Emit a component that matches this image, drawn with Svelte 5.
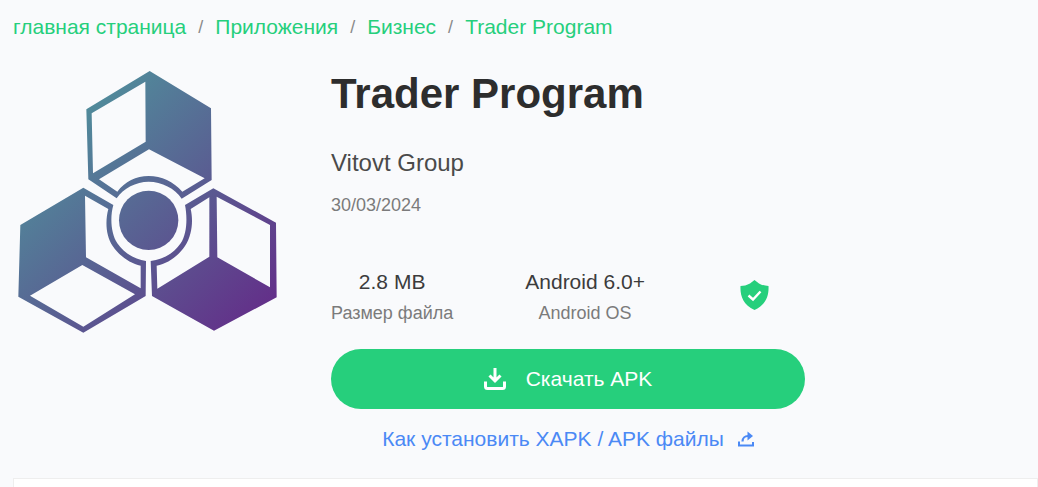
<script>
  const crumbs = ['главная страница', 'Приложения', 'Бизнес', 'Trader Program'];
</script>

<div class="page">
  <nav class="crumbs">
    {#each crumbs as crumb, i}
      {#if i > 0}<span class="sep">/</span>{/if}
      <a href="#top">{crumb}</a>
    {/each}
  </nav>

  <section class="app">
    <svg class="logo" viewBox="0 0 900 840" aria-hidden="true">
      <defs>
        <linearGradient id="lg" gradientUnits="userSpaceOnUse" x1="130" y1="180" x2="780" y2="830">
          <stop offset="0" stop-color="#4f929c" />
          <stop offset="1" stop-color="#642a88" />
        </linearGradient>
      </defs>
      <g fill="url(#lg)" fill-rule="evenodd">
        <path d="M449 33L633 145L635 360L545 416C525 385 485 365 446 365C408 365 370 385 350 415L265 358L259 148Z
                 M275 160L436 65L437 245L279 340Z
                 M447 268L614 355L547 395C520 365 485 348 446 348C408 348 375 365 352 395L297 358Z" />
        <path d="M250 383L340 435C330 470 332 520 352 550C372 580 405 598 438 603L437 708L250 818L55 710L61 495Z
                 M255 407L325 447C316 480 316 525 338 558C358 588 390 610 422 617L422 685L258 592Z
                 M247 615L405 703L250 800L90 707Z" />
        <path d="M640 385L828 488L830 712L642 812L456 708L452 603C490 598 522 580 542 550C562 520 562 470 555 435Z
                 M650 410L810 495L810 682L652 592Z
                 M628 412L628 590L472 686L470 617C505 610 535 588 555 558C577 525 580 480 572 447Z" />
        <circle cx="446" cy="481" r="89" />
      </g>
    </svg>

    <div class="info">
      <h1>Trader Program</h1>
      <p class="dev">Vitovt Group</p>
      <p class="date">30/03/2024</p>

      <div class="stats">
        <div class="stat size">
          <strong>2.8 MB</strong>
          <span>Размер файла</span>
        </div>
        <div class="stat os">
          <strong>Android 6.0+</strong>
          <span>Android OS</span>
        </div>
        <svg class="shield" viewBox="0 0 29 30" aria-hidden="true">
          <path d="M14.500 0L19 3.500C22 5.200 25.500 6 28.500 6C29 16 26 24.500 14.500 30C3 24.500 0 16 .5 6C3.500 6 7 5.200 10 3.500Z" fill="#26cf7c" />
          <path d="M8.500 15.500L13 19.500L20.500 11.500" fill="none" stroke="#fff" stroke-width="2.400" />
        </svg>
      </div>

      <a class="download" href="#top">
        <svg viewBox="0 0 22 22" aria-hidden="true">
          <path d="M11 0V13M5.500 7.500L11 13L16.500 7.500" fill="none" stroke="#fff" stroke-width="3" />
          <path d="M1.500 13.500V18.500A2 2 0 0 0 3.500 20.500H18.500A2 2 0 0 0 20.500 18.500V13.500" fill="none" stroke="#fff" stroke-width="3" />
        </svg>
        <span>Скачать APK</span>
      </a>

      <a class="howto" href="#top">
        <span>Как установить XAPK / APK файлы</span>
        <svg viewBox="0 0 16 16" aria-hidden="true">
          <path d="M1 10.500V14.500H15V11" fill="none" stroke="#4b89f5" stroke-width="2" />
          <path d="M4.500 10.500C4.500 7 7 5 10 5" fill="none" stroke="#4b89f5" stroke-width="2.200" />
          <path d="M9.500 .5L15 5L9.500 9.500Z" fill="#4b89f5" />
        </svg>
      </a>
    </div>
  </section>

  <div class="next"></div>
</div>

<style>
  :global(body) {
    margin: 0;
    background: #f9fafc;
  }

  .page {
    height: 487px;
    overflow: hidden;
    font-family: "Liberation Sans", Arial, sans-serif;
    color: #333;
  }

  .crumbs {
    display: flex;
    align-items: center;
    gap: 12px;
    padding: 15px 13px 0;
    height: 24px;
    font-size: 21px;
    line-height: 24px;
  }

  .crumbs a {
    color: #26cf7c;
    text-decoration: none;
  }

  .sep {
    color: #8a8a8a;
    font-size: 18px;
  }

  .app {
    display: flex;
    gap: 31px;
    padding-top: 21px;
  }

  .logo {
    width: 300px;
    height: 280px;
    flex: none;
  }

  .info {
    width: 474px;
    padding-top: 9px;
  }

  h1 {
    margin: 0;
    font-size: 42px;
    line-height: 50px;
    font-weight: 700;
    color: #2d2d2d;
  }

  .dev {
    margin: 30px 0 0;
    font-size: 24px;
    line-height: 28px;
    color: #4a4a4a;
  }

  .date {
    margin: 16px 0 0;
    font-size: 18px;
    line-height: 24px;
    color: #7b7b7b;
  }

  .stats {
    display: flex;
    align-items: center;
    margin-top: 52px;
  }

  .stat {
    display: flex;
    flex-direction: column;
    align-items: center;
    gap: 6px;
  }

  .stat strong {
    font-size: 21px;
    line-height: 26px;
    font-weight: 400;
    color: #3c3c3c;
  }

  .stat span {
    font-size: 18px;
    line-height: 24px;
    color: #7b7b7b;
  }

  .os {
    margin-left: 72px;
  }

  .shield {
    width: 29px;
    height: 30px;
    margin: 0 0 5px 95px;
  }

  .download {
    display: flex;
    align-items: center;
    justify-content: center;
    gap: 20px;
    height: 60px;
    margin-top: 24px;
    border-radius: 30px;
    background: #26cf7c;
    color: #fff;
    font-size: 21px;
    text-decoration: none;
  }

  .download svg {
    width: 22px;
    height: 22px;
  }

  .howto {
    display: flex;
    align-items: center;
    justify-content: center;
    gap: 14px;
    margin-top: 18px;
    color: #4b89f5;
    font-size: 21px;
    line-height: 24px;
    text-decoration: none;
  }

  .howto svg {
    width: 16px;
    height: 16px;
  }

  .next {
    margin: 27px 0 0 13px;
    height: 40px;
    background: #fff;
    border: 1px solid #eee;
  }
</style>
